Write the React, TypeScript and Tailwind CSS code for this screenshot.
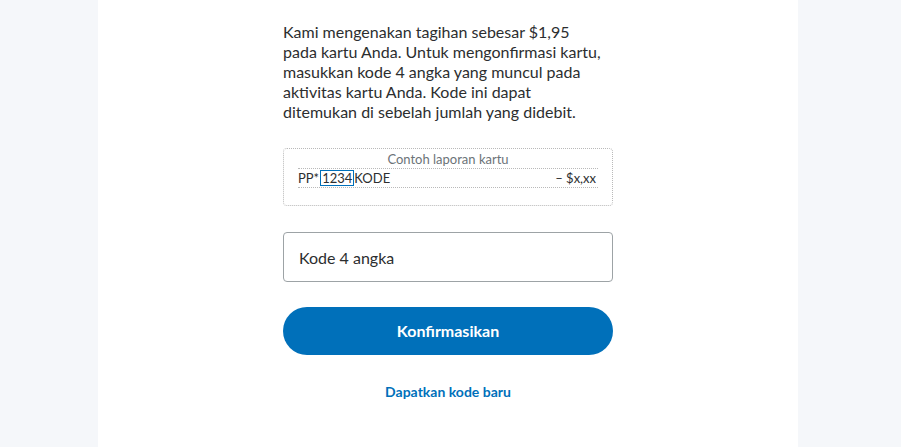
import React from 'react';

const font = { fontFamily: 'Lato, "Noto Sans", sans-serif' };

const CardSample: React.FC = () => (
    <div className="mt-[26px] rounded border border-dotted border-[#b9b9b9] px-[14px] pb-[17px] pt-[1px]">
        <div className="text-center text-[13px] leading-[18px] text-[#6c7378]">Contoh laporan kartu</div>
        <div className="flex items-center justify-between border-y border-dotted border-[#b9b9b9] text-[13px] leading-[18px] text-[#2c2e2f]">
            <div className="flex items-center">
                <span>PP*</span>
                <span className="ml-[1px] border border-[#0070ba] px-[1px] leading-[14px]">1234</span>
                <span>KODE</span>
            </div>
            <span className="pr-[2px]">– $x,xx</span>
        </div>
    </div>
);

const App: React.FC = () => {
    return (
        <div className="min-h-[447px] w-full bg-[#f5f7fa]" style={font}>
            <div className="ml-[98px] flex min-h-[447px] w-[700px] justify-center bg-white">
                <div className="w-[330px] pt-[22px]">
                    <p className="text-[16px] leading-[20px] text-[#2c2e2f]">
                        Kami mengenakan tagihan sebesar $1,95<br />
                        pada kartu Anda. Untuk mengonfirmasi kartu,<br />
                        masukkan kode 4 angka yang muncul pada<br />
                        aktivitas kartu Anda. Kode ini dapat<br />
                        ditemukan di sebelah jumlah yang didebit.
                    </p>
                    <CardSample />
                    <input
                        type="text"
                        placeholder="Kode 4 angka"
                        className="mt-[26px] h-[50px] w-full rounded border border-[#9da3a6] px-[15px] text-[16px] text-[#2c2e2f] outline-none placeholder:text-[#2c2e2f]"
                        style={font}
                    />
                    <button className="mt-[25px] h-[48px] w-full rounded-full bg-[#0070ba] text-[16px] font-bold text-white">
                        Konfirmasikan
                    </button>
                    <div className="mt-[26px] text-center leading-[20px]">
                        <a href="#" className="text-[14px] font-bold text-[#0070ba]">Dapatkan kode baru</a>
                    </div>
                </div>
            </div>
        </div>
    );
};

export default App;
